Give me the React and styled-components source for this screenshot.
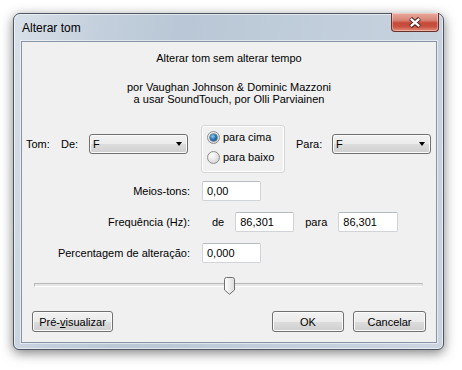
import styled, { createGlobalStyle } from "styled-components";

const GlobalStyle = createGlobalStyle`
  html, body {
    margin: 0;
    padding: 0;
    background: #ffffff;
  }
  body {
    font-family: "Liberation Sans", Arial, sans-serif;
    font-size: 11px;
    color: #000;
  }
`;

const Page = styled.div`
  width: 462px;
  height: 370px;
  padding: 13px 0 0 13px;
  box-sizing: border-box;
`;

const Window = styled.div`
  box-sizing: border-box;
  width: 431px;
  height: 337px;
  border: 1px solid #4e5864;
  border-radius: 7px 7px 6px 6px;
  background:
    linear-gradient(100deg, rgba(255, 255, 255, 0.45) 0%, rgba(255, 255, 255, 0.15) 18%, rgba(255, 255, 255, 0) 35%, rgba(255, 255, 255, 0.12) 65%, rgba(255, 255, 255, 0.25) 100%),
    #b9c7d6;
  box-shadow: 0 3px 12px rgba(0, 0, 0, 0.5), inset 0 0 0 1px rgba(255, 255, 255, 0.55);
  display: flex;
  flex-direction: column;
`;

const TitleBar = styled.div`
  height: 27px;
  display: flex;
  align-items: center;
  justify-content: space-between;
  padding-left: 8px;
  flex: none;
`;

const Title = styled.span`
  font-size: 12px;
  color: #000;
  margin-top: 1px;
`;

const CloseButton = styled.div`
  align-self: flex-start;
  box-sizing: border-box;
  width: 48px;
  height: 19px;
  margin: -1px 4px 0 0;
  border: 1px solid #6a2f29;
  border-top: none;
  border-radius: 0 0 4px 4px;
  background: linear-gradient(#e9aa9e 0%, #d98576 40%, #c54a3b 55%, #c9503f 75%, #e28d78 100%);
  box-shadow: inset 0 0 0 1px rgba(255, 255, 255, 0.35);
  display: flex;
  align-items: center;
  justify-content: center;
`;

const Client = styled.div`
  flex: 1;
  margin: 0 6px 6px 7px;
  border: 1px solid #8794a5;
  box-shadow: 0 0 0 1px rgba(255, 255, 255, 0.5);
  background: #f0f0f0;
  padding-top: 10px;
  display: flex;
  flex-direction: column;
`;

const Heading = styled.div`
  text-align: center;
  line-height: 13px;
`;

const Credits = styled.div`
  margin-top: 16px;
  text-align: center;
  line-height: 12px;
`;

const ToneRow = styled.div`
  margin-top: 20px;
  padding-left: 4px;
  display: flex;
  align-items: flex-start;
`;

const InlineLabel = styled.span`
  width: ${(p) => p.$w}px;
  margin-left: ${(p) => p.$ml || 0}px;
  margin-top: 9px;
  line-height: 20px;
  flex: none;
`;

const Combo = styled.div`
  box-sizing: border-box;
  width: 99px;
  height: 20px;
  margin-top: 9px;
  border: 1px solid #707070;
  border-radius: 3px;
  background: linear-gradient(#f2f2f2 0%, #ebebeb 50%, #dddddd 51%, #cfcfcf 100%);
  box-shadow: inset 0 0 0 1px #fbfbfb;
  display: flex;
  align-items: center;
  justify-content: space-between;
  padding: 0 5px 0 3px;
  flex: none;
`;

const Arrow = styled.span`
  width: 0;
  height: 0;
  border-left: 3.5px solid transparent;
  border-right: 3.5px solid transparent;
  border-top: 4px solid #000;
`;

const RadioBox = styled.div`
  box-sizing: border-box;
  width: 84px;
  height: 48px;
  margin-left: 13px;
  border: 1px solid #d5d5d5;
  border-radius: 3px;
  box-shadow: inset 0 0 0 1px #ffffff;
  padding: 3px 0 0 5px;
  display: flex;
  flex-direction: column;
  gap: 4px;
  flex: none;
`;

const RadioItem = styled.div`
  height: 16px;
  display: flex;
  align-items: center;
  gap: 3px;
`;

const RadioCircle = styled.span`
  box-sizing: border-box;
  width: 13px;
  height: 13px;
  border-radius: 50%;
  border: 1px solid #8e8f8f;
  background: radial-gradient(circle at 35% 30%, #ffffff 0%, #e9e9e9 45%, #c6c6c6 100%);
  display: flex;
  align-items: center;
  justify-content: center;
  &::after {
    content: "";
    display: ${(p) => (p.$checked ? "block" : "none")};
    width: 7px;
    height: 7px;
    border-radius: 50%;
    background: radial-gradient(circle at 40% 35%, #8fd0f5 0%, #2a79b8 45%, #113e6a 100%);
    box-shadow: 0 0 0 0.5px #17324d;
  }
`;

const FieldRow = styled.div`
  margin-top: ${(p) => p.$mt}px;
  height: 20px;
  display: flex;
  align-items: center;
`;

const FieldLabel = styled.span`
  width: 168px;
  text-align: right;
  flex: none;
`;

const Word = styled.span`
  margin-left: ${(p) => p.$ml}px;
  flex: none;
`;

const TextBox = styled.input`
  box-sizing: border-box;
  width: ${(p) => p.$w || 59}px;
  height: 20px;
  margin: 0 0 0 ${(p) => p.$ml}px;
  padding: 0 0 0 4px;
  border: 1px solid #d0d3d8;
  border-top-color: #b6b9be;
  border-radius: 2px;
  background: #fff;
  font-family: "Liberation Sans", Arial, sans-serif;
  font-size: 11px;
  color: #000;
  outline: none;
`;

const SliderRow = styled.div`
  position: relative;
  height: 19px;
  margin: 13px 13px 0 12px;
`;

const Track = styled.div`
  position: absolute;
  left: 0;
  right: 0;
  top: 7px;
  height: 2px;
  background: #e6e6e6;
  border-top: 1px solid #b9b9b9;
  border-left: 1px solid #b9b9b9;
  border-right: 1px solid #d9d9d9;
  border-bottom: 1px solid #ffffff;
`;

const Thumb = styled.svg`
  position: absolute;
  top: 1px;
`;

const ButtonRow = styled.div`
  margin-top: 16px;
  padding: 0 10px;
  display: flex;
  gap: 9px;
`;

const Button = styled.div`
  box-sizing: border-box;
  width: ${(p) => p.$w}px;
  height: 21px;
  margin-right: ${(p) => (p.$push ? "auto" : "0")};
  border: 1px solid #707070;
  border-radius: 3px;
  background: linear-gradient(#f2f2f2 0%, #ebebeb 50%, #dddddd 51%, #cfcfcf 100%);
  box-shadow: inset 0 0 0 1px #fbfbfb;
  display: flex;
  align-items: center;
  justify-content: center;
`;

const Mnemonic = styled.span`
  text-decoration: underline;
`;

function Radio({ checked, children }) {
  return (
    <RadioItem>
      <RadioCircle $checked={checked} />
      {children}
    </RadioItem>
  );
}

export default function App() {
  const value = 0.5;
  return (
    <Page>
      <GlobalStyle />
      <Window>
        <TitleBar>
          <Title>Alterar tom</Title>
          <CloseButton>
            <svg width="14" height="11" viewBox="0 0 14 11">
              <path d="M2.5 1.5 L11.5 9.5 M11.5 1.5 L2.5 9.5" stroke="#3b1a17" strokeWidth="4.2" />
              <path d="M2.8 1.8 L11.2 9.2 M11.2 1.8 L2.8 9.2" stroke="#ffffff" strokeWidth="2.4" />
            </svg>
          </CloseButton>
        </TitleBar>
        <Client>
          <Heading>Alterar tom sem alterar tempo</Heading>
          <Credits>
            por Vaughan Johnson &amp; Dominic Mazzoni
            <br />a usar SoundTouch, por Olli Parviainen
          </Credits>

          <ToneRow>
            <InlineLabel $w={35}>Tom:</InlineLabel>
            <InlineLabel $w={28}>De:</InlineLabel>
            <Combo>
              F<Arrow />
            </Combo>
            <RadioBox>
              <Radio checked>para cima</Radio>
              <Radio>para baixo</Radio>
            </RadioBox>
            <InlineLabel $w={36} $ml={11}>
              Para:
            </InlineLabel>
            <Combo>
              F<Arrow />
            </Combo>
          </ToneRow>

          <FieldRow $mt={8}>
            <FieldLabel>Meios-tons:</FieldLabel>
            <TextBox $ml={12} readOnly defaultValue="0,00" />
          </FieldRow>
          <FieldRow $mt={11}>
            <FieldLabel>Frequência (Hz):</FieldLabel>
            <Word $ml={22}>de</Word>
            <TextBox $ml={11} readOnly defaultValue="86,301" />
            <Word $ml={11}>para</Word>
            <TextBox $ml={11} $w={60} readOnly defaultValue="86,301" />
          </FieldRow>
          <FieldRow $mt={11}>
            <FieldLabel>Percentagem de alteração:</FieldLabel>
            <TextBox $ml={12} readOnly defaultValue="0,000" />
          </FieldRow>

          <SliderRow>
            <Track />
            <Thumb
              width="11"
              height="18"
              viewBox="0 0 11 18"
              style={{ left: `calc(${value * 100}% - 5px)` }}
            >
              <defs>
                <linearGradient id="thumbFill" x1="0" y1="0" x2="1" y2="0">
                  <stop offset="0" stopColor="#ffffff" />
                  <stop offset="1" stopColor="#dcdcdc" />
                </linearGradient>
              </defs>
              <path
                d="M0.5 2.5 Q0.5 0.5 2.5 0.5 H8.5 Q10.5 0.5 10.5 2.5 V13 L5.5 17.3 L0.5 13 Z"
                fill="url(#thumbFill)"
                stroke="#6f6f6f"
              />
            </Thumb>
          </SliderRow>

          <ButtonRow>
            <Button $w={81} $push>
              Pré-<Mnemonic>v</Mnemonic>isualizar
            </Button>
            <Button $w={72}>OK</Button>
            <Button $w={73}>Cancelar</Button>
          </ButtonRow>
        </Client>
      </Window>
    </Page>
  );
}
